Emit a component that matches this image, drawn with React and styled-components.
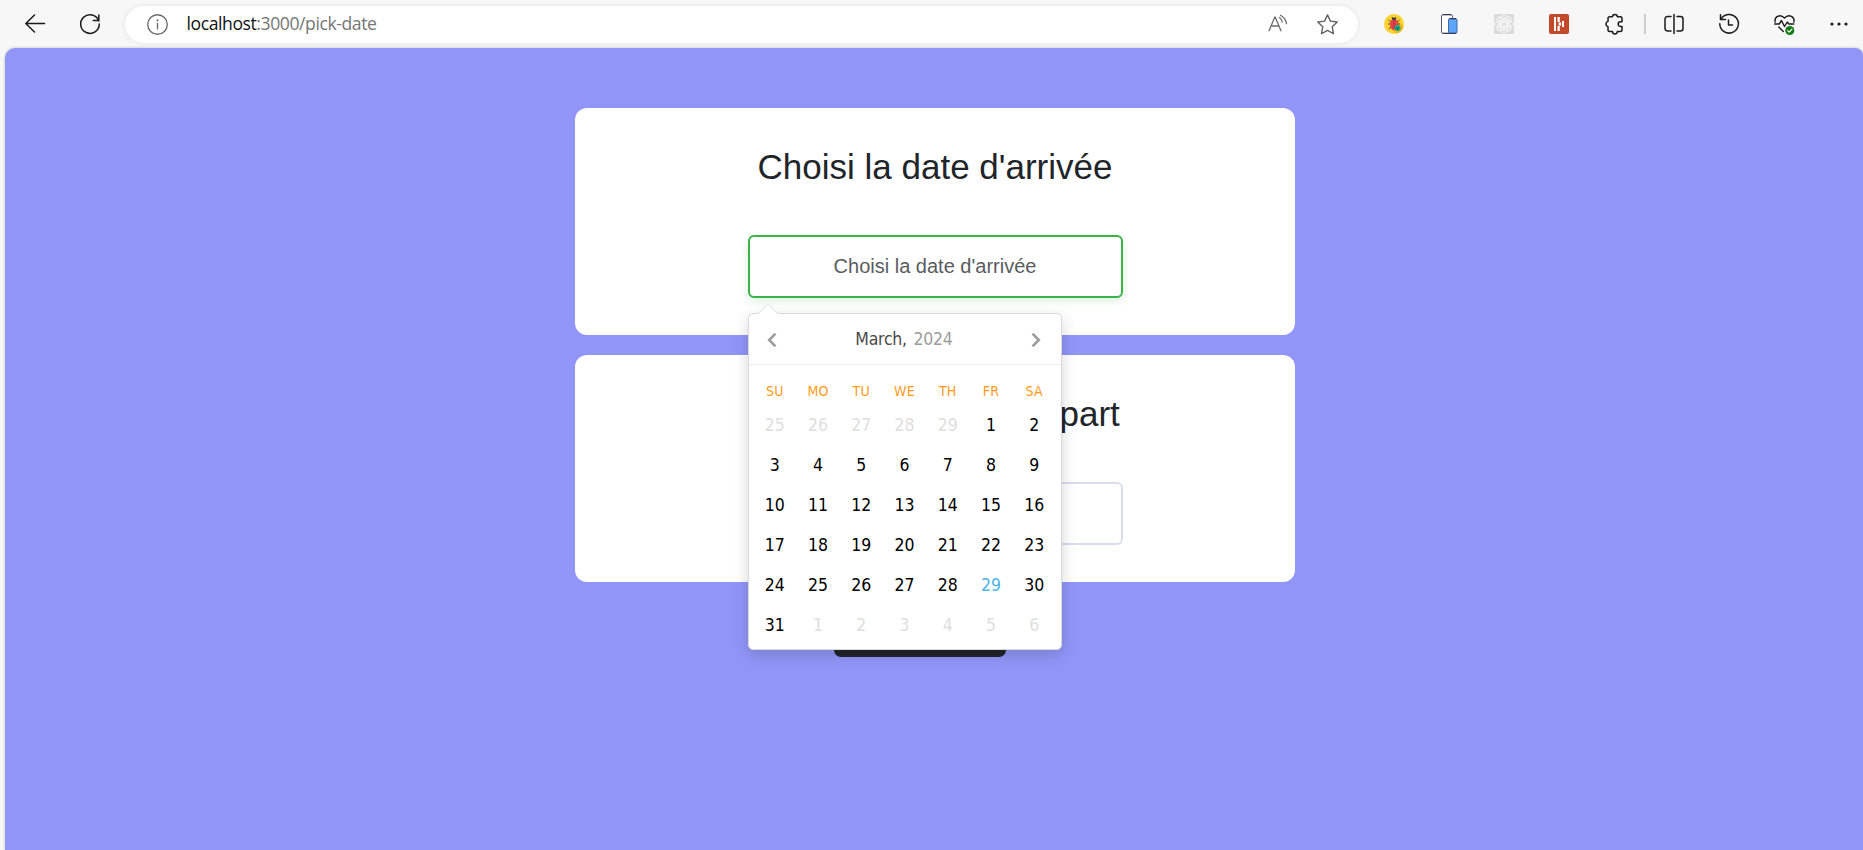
import React from "react";
import styled, { createGlobalStyle, css } from "styled-components";

const GlobalStyle = createGlobalStyle`
  * { box-sizing: border-box; }
  html, body { margin: 0; height: 100%; background: #f7f7f7; overflow: hidden; }
  #root { height: 100%; }
`;

const Browser = styled.div`
  display: flex;
  flex-direction: column;
  height: 850px;
  width: 1863px;
  overflow: hidden;
  background: #f7f7f7;
`;

const Toolbar = styled.header`
  display: flex;
  align-items: center;
  flex: none;
  height: 48px;
  padding-left: 7px;
`;

const ToolButton = styled.span`
  display: flex;
  flex: none;
  align-items: center;
  justify-content: center;
  width: 55px;
  height: 48px;

  svg { display: block; overflow: visible; }
`;

const AddressBar = styled.div`
  display: flex;
  align-items: center;
  flex: none;
  width: 1233px;
  height: 37px;
  margin: 0 8.5px 0 8px;
  padding: 0 20px 0 22px;
  border-radius: 19px;
  background: #fff;
  box-shadow: 0 0 5px rgba(0, 0, 0, 0.09);

  svg { display: block; flex: none; overflow: visible; }
`;

const Url = styled.span`
  flex: 1;
  margin-left: 18.5px;
  padding-bottom: 2px;
  font: 400 17.6px/24px "Open Sans", sans-serif;
  letter-spacing: -0.43px;
  color: #757575;

  b { font-weight: 400; color: #111; }
`;

const AddressActions = styled.div`
  display: flex;
  align-items: center;
  gap: 29px;
`;

const Divider = styled.span`
  flex: none;
  width: 2px;
  height: 20px;
  margin: 0 1px 0 2px;
  background: #cecece;
`;

const Page = styled.main`
  flex: 1;
  display: flex;
  flex-direction: column;
  align-items: center;
  gap: 20px;
  margin-left: 5px;
  padding-top: 60px;
  border-radius: 10px 8px 0 0;
  background: #9195f7;
  box-shadow: 0 0 3px rgba(0, 0, 0, 0.25);
`;

const Card = styled.section`
  display: flex;
  flex-direction: column;
  align-items: center;
  flex: none;
  width: 720px;
  height: 227px;
  margin-left: 2px;
  padding-top: 38px;
  border-radius: 12px;
  background: #fff;
`;

const Title = styled.h2`
  margin: 0 0 47px;
  font: 400 35px/42px "Liberation Sans", Arial, sans-serif;
  color: #212529;
  white-space: nowrap;
`;

const Field = styled.div`
  position: relative;
  width: 375px;
  height: 63px;
`;

const DateInput = styled.div`
  display: flex;
  align-items: center;
  justify-content: center;
  height: 63px;
  padding-bottom: 2px;
  border: 2px solid #d9dcea;
  border-radius: 6px;
  background: #fff;
  font: 400 20px/30px "Liberation Sans", Arial, sans-serif;
  color: #595c5f;
  ${(p) => p.$active && css`
    border-color: #38b449;
    box-shadow: 0 3px 8px rgba(56, 180, 73, 0.18);
  `}
`;

const Picker = styled.div`
  position: absolute;
  z-index: 5;
  top: 78px;
  left: 0;
  width: 314px;
  height: 337px;
  border: 1px solid #d9d9d9;
  border-radius: 5px;
  background: #fff;
  box-shadow: 0 5px 15px rgba(0, 0, 0, 0.16);
  font-family: "DejaVu Sans Condensed", "DejaVu Sans", sans-serif;
  font-stretch: condensed;
`;

const Pointer = styled.svg`
  position: absolute;
  top: -12px;
  left: 9px;
`;

const PickerNav = styled.div`
  display: flex;
  align-items: center;
  justify-content: space-between;
  height: 51px;
  padding: 0 19px 0 18px;
  border-bottom: 1px solid #ececec;

  svg { display: block; margin-top: 2px; }
`;

const Month = styled.span`
  font-size: 17.5px;
  line-height: 24px;
  letter-spacing: -0.25px;
  color: #4a4a4a;

  i { margin-left: 2px; font-style: normal; color: #9c9c9c; }
`;

const Grid = styled.div`
  display: grid;
  grid-template-columns: repeat(7, 43.25px);
  justify-content: center;
`;

const Weekdays = styled(Grid)`
  height: 40px;
  padding-top: 16px;
`;

const Weekday = styled.span`
  font-size: 14px;
  line-height: 20px;
  letter-spacing: 0.2px;
  text-align: center;
  color: #ff9a19;
`;

const tones = { normal: "#000", muted: "#dedede", today: "#4eb5e6" };

const Day = styled.span`
  height: 40px;
  font-size: 17.5px;
  line-height: 40px;
  text-align: center;
  color: ${(p) => tones[p.$tone]};
`;

const SubmitButton = styled.button`
  flex: none;
  width: 172px;
  height: 47px;
  margin: 8px 28px 0 0;
  border: 0;
  border-radius: 7px;
  background: #212529;
`;

const Stroke = ({ size = 20, color = "#1b1b1b", width = 1.5, children }) => (
  <svg width={size} height={size} viewBox="0 0 20 20" fill="none" stroke={color}
    strokeWidth={width} strokeLinecap="round" strokeLinejoin="round">{children}</svg>
);

const Bug = () => (
  <svg width="20" height="20" viewBox="0 0 20 20">
    <circle cx="10" cy="10" r="10" fill="#fdd22f" />
    <path d="M13 6l6.500 6.500A10 10 0 0 1 13 19.500L7 15z" fill="#efb514" />
    <path d="M4.500 6l2.500 2M4 10h3M4.500 15L7 13M15.500 6L13 8M16 10h-3M7.800 3L9 4.500M12.200 3L11 4.500" stroke="#5b4a3a" strokeWidth="1" fill="none" />
    <ellipse cx="10" cy="10.500" rx="4" ry="5.600" fill="#e8434a" />
    <path d="M7.600 5.800a2.400 2.400 0 0 1 4.800 0z" fill="#30394a" />
    <path d="M10 6v9" stroke="#a92f3b" />
    <circle cx="13.500" cy="14" r="3" fill="#17aa8b" />
    <path d="M12 13l1.500 1.500L15 13M13.500 14.500V16" stroke="#075d55" fill="none" />
  </svg>
);

const Devices = () => (
  <svg width="18" height="20" viewBox="0 0 18 20">
    <rect x="1.500" y=".6" width="11" height="18.800" rx="1.600" fill="#fff" stroke="#555a72" strokeWidth="1" />
    <path d="M3 .7h8M3 19.300h8" stroke="#353a55" strokeWidth="1.300" />
    <rect x="8.500" y="4.600" width="8.500" height="14.800" rx="1.500" fill="#5ba5fb" stroke="#4268a8" strokeWidth="1" />
    <path d="M9.500 4.700H16M9.500 19.300H16" stroke="#353a55" strokeWidth="1.300" />
  </svg>
);

const Atom = () => (
  <svg width="20" height="20" viewBox="0 0 20 20">
    <rect width="20" height="20" rx="1" fill="#dcdcdc" />
    <g fill="none" stroke="#fafafa" strokeWidth=".9">
      {[0, 45, 90, 135].map((a) => (
        <ellipse key={a} cx="10" cy="10" rx="8.800" ry="4" transform={`rotate(${a} 10 10)`} />
      ))}
      <circle cx="10" cy="10" r="2.200" strokeWidth="1.200" />
    </g>
  </svg>
);

const RedBadge = () => (
  <svg width="20" height="20" viewBox="0 0 20 20">
    <rect width="20" height="20" rx="2" fill="#c24a2b" />
    <path d="M5 3h2v14H5zM8.500 3h2.300v5H8.500zM8.500 12h2.300v5H8.500zM9.500 8.500H12v3H9.500zM13 7h2v6h-2z" fill="#fff" />
  </svg>
);

const Heart = () => (
  <svg width="21" height="20" viewBox="0 0 21 20" fill="none" stroke="#1b1b1b" strokeWidth="1.400" strokeLinecap="round" strokeLinejoin="round">
    <path d="M1.200 8C-.2 3 6 -.8 10.500 4 15 -.8 21.200 3 19.800 8" />
    <path d="M.7 10h4.500L7.500 6.500l3 6 2.800-4.500 1.500 2h5M4.800 13l4.500 4.500" />
    <circle cx="15.800" cy="16.500" r="4.500" fill="#127b16" stroke="none" />
    <path d="M13.700 16.600l1.500 1.500 2.800-3" stroke="#fff" strokeWidth="1.200" />
  </svg>
);

const Chevron = ({ right }) => (
  <svg width="10" height="16" viewBox="0 0 10 16" fill="none" stroke="#9c9c9c" strokeWidth="2.600">
    <path d={right ? "M1.500 1.700L7.800 8l-6.300 6.300" : "M8.500 1.700L2.200 8l6.300 6.300"} />
  </svg>
);

const weekdays = ["SU", "MO", "TU", "WE", "TH", "FR", "SA"];
const days = [
  ...[25, 26, 27, 28, 29].map((n) => ({ n, tone: "muted" })),
  ...Array.from({ length: 31 }, (_, i) => ({ n: i + 1, tone: i === 28 ? "today" : "normal" })),
  ...[1, 2, 3, 4, 5, 6].map((n) => ({ n, tone: "muted" })),
];

const Calendar = () => (
  <Picker>
    <Pointer width="20" height="13" viewBox="0 0 20 13">
      <path d="M.5 11.500L10 1.500l9.500 10V13H.5z" fill="#fff" />
      <path d="M.5 11.500L10 1.500l9.500 10" fill="none" stroke="#d9d9d9" />
    </Pointer>
    <PickerNav>
      <Chevron />
      <Month>March, <i>2024</i></Month>
      <Chevron right />
    </PickerNav>
    <Weekdays>{weekdays.map((d) => <Weekday key={d}>{d}</Weekday>)}</Weekdays>
    <Grid>{days.map((d, i) => <Day key={i} $tone={d.tone}>{d.n}</Day>)}</Grid>
  </Picker>
);

export default function App() {
  return (
    <Browser>
      <GlobalStyle />
      <Toolbar>
        <ToolButton><Stroke><path d="M19.500 9.500H.8M9.500 1L.8 9.500l8.700 8.500" /></Stroke></ToolButton>
        <ToolButton><Stroke><path d="M18.800 7A9.300 9.300 0 1 0 19.300 10M18.800 1v5.500h-5.500" /></Stroke></ToolButton>
        <AddressBar>
          <Stroke size={21} color="#6c6c6c" width={1.3}><circle cx="10" cy="10" r="9.300" /><path d="M10 9v5.200" /><circle cx="10" cy="6" r=".4" /></Stroke>
          <Url><b>localhost</b>:3000/pick-date</Url>
          <AddressActions>
            <Stroke color="#6c6c6c" width={1.3}><path d="M1 16.800L7 2.800l6 14M3.200 12h7.600M11.500 3.500q2.300 1.700 2.700 4.500M12.500 1.200q5.300 3 6 8.500" /></Stroke>
            <Stroke size={21} color="#606060" width={1.3}><path d="M10 .8l2.800 6 6.500.8-4.800 4.600 1.200 6.600L10 15.600l-5.700 3.200 1.200-6.600L.7 7.600l6.500-.8z" /></Stroke>
          </AddressActions>
        </AddressBar>
        <ToolButton><Bug /></ToolButton>
        <ToolButton><Devices /></ToolButton>
        <ToolButton><Atom /></ToolButton>
        <ToolButton><RedBadge /></ToolButton>
        <ToolButton>
          <Stroke><path d="M5.500 2.800h3a2.400 2.400 0 0 1 4.800 0h3.200A1.500 1.500 0 0 1 18 4.300v3.500h-1.500a2.300 2.300 0 0 0 0 4.600H18V16a1.500 1.500 0 0 1-1.500 1.500h-3.200a2.400 2.400 0 0 1-4.800 0h-3A1.500 1.500 0 0 1 4 16v-3.200a2.800 2.800 0 0 1 0-5.400V4.300a1.500 1.500 0 0 1 1.500-1.500z" /></Stroke>
        </ToolButton>
        <Divider />
        <ToolButton>
          <Stroke><path d="M10 .5v19M7 2.500H3.500A2.500 2.500 0 0 0 1 5v9.500A2.500 2.500 0 0 0 3.500 17H7M13 2.500h3.500A2.500 2.500 0 0 1 19 5v9.500a2.500 2.500 0 0 1-2.500 2.500H13" /></Stroke>
        </ToolButton>
        <ToolButton>
          <Stroke><path d="M2 5.200a9.300 9.300 0 1 1-1.200 4.500M1.500.8v4.700h5M9.500 6v5h4" /></Stroke>
        </ToolButton>
        <ToolButton><Heart /></ToolButton>
        <ToolButton>
          <svg width="18" height="4" viewBox="0 0 18 4" fill="#1b1b1b"><circle cx="2" cy="2" r="1.600" /><circle cx="9" cy="2" r="1.600" /><circle cx="16" cy="2" r="1.600" /></svg>
        </ToolButton>
      </Toolbar>
      <Page>
        <Card>
          <Title>Choisi la date d'arrivée</Title>
          <Field>
            <DateInput $active>Choisi la date d'arrivée</DateInput>
            <Calendar />
          </Field>
        </Card>
        <Card>
          <Title>Choisi la date de départ</Title>
          <Field><DateInput /></Field>
        </Card>
        <SubmitButton aria-label="Valider" />
      </Page>
    </Browser>
  );
}
